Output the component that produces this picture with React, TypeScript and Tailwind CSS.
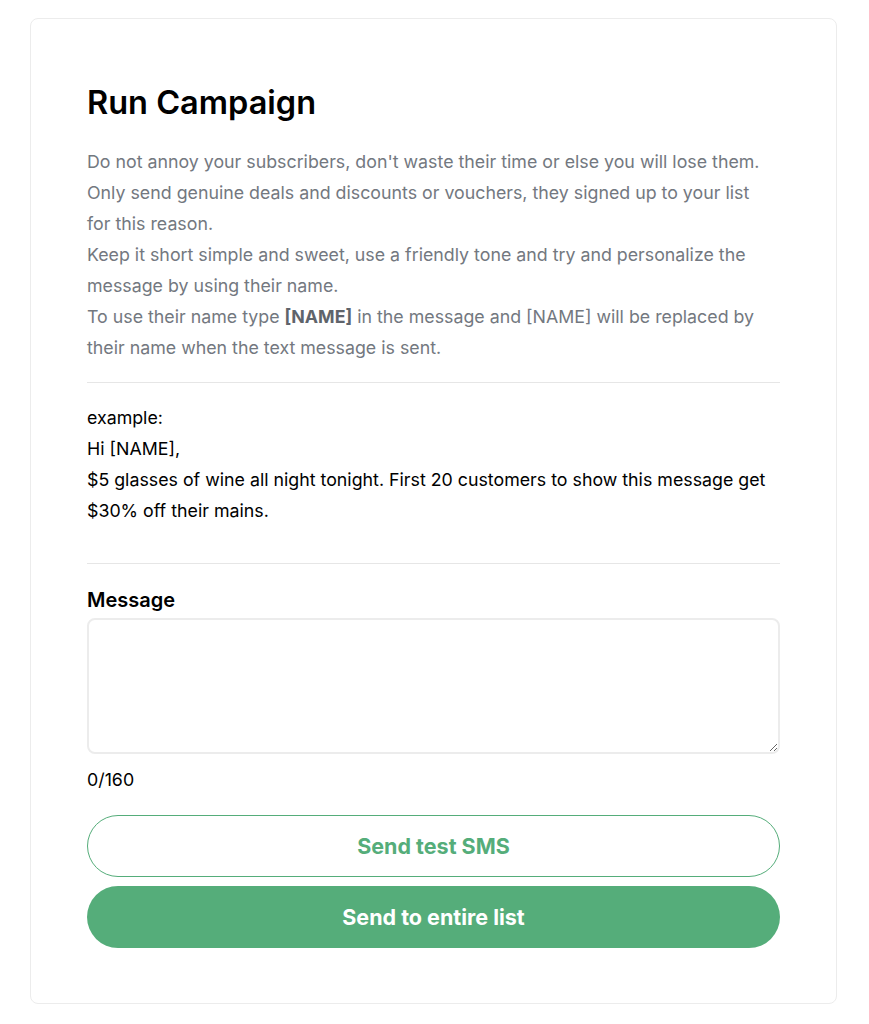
import React, { useState } from 'react'

const font = { fontFamily: '"Inter", "Liberation Sans", sans-serif' }

export default function App() {
  const [message, setMessage] = useState('')

  return (
    <div className="min-h-screen bg-white pt-[18px] pb-5 px-[30px]" style={font}>
      <div className="w-[807px] rounded-lg border border-[#ececec] bg-white px-[56px] pt-[62px] pb-[55px]">
        <h1 className="text-[32.5px] leading-[44px] font-semibold text-black">Run Campaign</h1>

        <div className="mt-[21px] pr-[12px] text-[17.8px] leading-[31px] text-[#737880]">
          <p>Do not annoy your subscribers, don't waste their time or else you will lose them.</p>
          <p>Only send genuine deals and discounts or vouchers, they signed up to your list for this reason.</p>
          <p>Keep it short simple and sweet, use a friendly tone and try and personalize the message by using their name.</p>
          <p>
            To use their name type <strong className="font-bold text-[#5f646b]">[NAME]</strong> in the message and [NAME] will be replaced by their name when the text message is sent.
          </p>
        </div>

        <div className="mt-[19px] h-px bg-[#e6e6e6]" />

        <div className="mt-[19px] text-[17.8px] leading-[31px] text-black">
          <p>example:</p>
          <p>Hi [NAME],</p>
          <p>$5 glasses of wine all night tonight. First 20 customers to show this message get $30% off their mains.</p>
        </div>

        <div className="mt-[37px] h-px bg-[#e6e6e6]" />

        <label className="mt-[22px] block text-[20px] leading-[28px] font-semibold text-black">Message</label>
        <textarea
          value={message}
          onChange={(e) => setMessage(e.target.value.slice(0, 160))}
          className="mt-[4px] block h-[136px] w-full rounded-lg border-2 border-[#ececec] bg-white p-3 text-[18px] outline-none"
        />
        <div className="mt-[14px] text-[17.8px] leading-[24px] text-black">{message.length}/160</div>

        <button className="mt-[23px] flex h-[62px] w-full items-center justify-center rounded-full border border-[#55ad7a] bg-white text-[21.5px] font-bold text-[#55ad7a]">
          Send test SMS
        </button>
        <button className="mt-[9px] flex h-[62px] w-full items-center justify-center rounded-full bg-[#55ad7a] text-[21.5px] font-bold text-white">
          Send to entire list
        </button>
      </div>
    </div>
  )
}
